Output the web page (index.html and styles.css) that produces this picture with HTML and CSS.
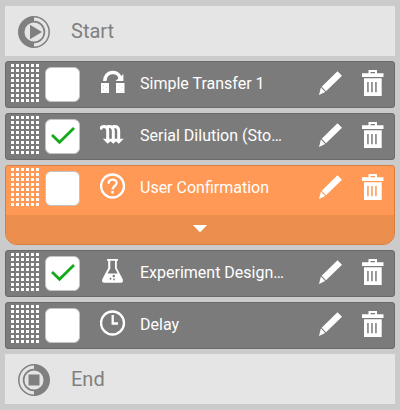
FILE: index.html
```
<!DOCTYPE html>
<html lang="en">
<head>
    <meta charset="UTF-8">
    <meta name="viewport" content="width=device-width, initial-scale=1.0">
    <title>Protocol Steps</title>
    <link rel="stylesheet" href="styles.css">
</head>
<body>
    <!-- shared icons -->
    <svg class="hidden">
        <symbol id="check" viewBox="0 0 35 35">
            <path d="M7 16 L14.5 23.3 L29 9" fill="none" stroke="#13ab1b" stroke-width="2.8"/>
        </symbol>
        <symbol id="pencil" viewBox="0 0 26 26">
            <path d="M20.5 1.2 L25 5.7 L9 21.2 L4.7 16.8 Z M3.9 17.6 L8.2 21.9 L2 25 Z"/>
        </symbol>
        <symbol id="trash" viewBox="0 0 22 26">
            <path fill-rule="evenodd" d="M0 3.2 H6.5 V0 H15 V3.2 H21.5 V7 H0 Z M8.5 2 V3.2 H13 V2 Z M2 8.2 H19.7 V26 H2 Z M5.2 12 V22.2 H6.7 V12 Z M9.2 12 V22.2 H10.7 V12 Z M13.2 12 V22.2 H14.7 V12 Z"/>
        </symbol>
        <symbol id="transfer" viewBox="0 0 26 26">
            <path d="M4.8 12 C5 1.5 18 1 20.2 9" fill="none" stroke="currentColor" stroke-width="3.6"/>
            <path d="M23.4 5 V12 H15.5 Z"/>
            <path d="M1 14 H9 V24 H1 Z M16 14 H24.5 V24 H16 Z"/>
            <path d="M3 16.5 h1 M6 18.5 h1 M3 20.5 h1 M6 22.5 h1 M18.5 16.5 h1 M21.5 18.5 h1 M18.5 20.5 h1 M21.5 22.5 h1" stroke="#d5d5d5" stroke-width="1"/>
        </symbol>
        <symbol id="dilution" viewBox="0 0 26 26">
            <path d="M.5 8.5 C1 6.4 2 5.6 3.6 5.6 C6.6 5.6 7.7 7 7.7 10 V20 M7 5.6 H8.8 C12 5.6 13.3 7 13.3 10 V20 M12.5 5.6 H14.4 C17.6 5.6 18.7 7 18.7 10 V20" fill="none" stroke="currentColor" stroke-width="3"/>
            <path d="M2.8 17.8 H23.8 L18.7 22.8 L16 20.2 L13.3 22.8 L10.5 20.2 L7.7 22.8 Z"/>
        </symbol>
        <symbol id="question" viewBox="0 0 26 26">
            <g fill="none" stroke="currentColor" stroke-width="2.3">
                <circle cx="12.5" cy="13" r="11.5"/>
                <path d="M8.5 10.7 C8.5 5.2 16.6 5.5 16.6 10 C16.6 12.8 12.6 13 12.6 16.5"/>
            </g>
            <path d="M11.3 18 H13.8 V20.5 H11.3 Z"/>
        </symbol>
        <symbol id="flask" viewBox="0 0 26 26">
            <path fill-rule="evenodd" d="M7 1 H18 V2.8 H16.8 V10 L22.6 21 Q23.8 24.7 21 24.7 H4.3 Q1.2 24.7 2.4 21 L8.2 10 V2.8 H7 Z M10.3 2.8 V10.5 L7.5 15.5 H17.8 L15 10.5 V2.8 Z"/>
            <g fill="#7b7b7b">
                <circle cx="13.8" cy="18" r="1.2"/>
                <circle cx="10.5" cy="20.8" r="1"/>
                <circle cx="14" cy="21.4" r=".9"/>
            </g>
        </symbol>
        <symbol id="clock" viewBox="0 0 26 26">
            <g fill="none" stroke="currentColor" stroke-width="2.3">
                <circle cx="12.5" cy="13" r="11.5"/>
                <path d="M12.7 5 V13.5 H18"/>
            </g>
        </symbol>
    </svg>

    <div class="steps">
        <div class="terminal">
            <svg class="terminal-icon" viewBox="0 0 32 32">
                <g fill="none" stroke="currentColor">
                    <circle cx="16" cy="16" r="15.2" stroke-width="1.5"/>
                    <circle cx="16" cy="16" r="10.4" stroke-width="1.7"/>
                    <path d="M16 3 A13 13 0 0 0 16 29" stroke-width="5"/>
                </g>
                <path d="M12 8.8 L24 16 L12 23.2 Z"/>
            </svg>
            <span>Start</span>
        </div>

        <div class="step">
            <div class="step-row">
                <div class="grip"></div>
                <div class="checkbox"></div>
                <svg class="step-icon"><use href="#transfer"/></svg>
                <span class="step-name">Simple Transfer 1</span>
                <svg class="edit"><use href="#pencil"/></svg>
                <svg class="delete"><use href="#trash"/></svg>
            </div>
        </div>

        <div class="step">
            <div class="step-row">
                <div class="grip"></div>
                <div class="checkbox"><svg><use href="#check"/></svg></div>
                <svg class="step-icon"><use href="#dilution"/></svg>
                <span class="step-name">Serial Dilution (Sto…</span>
                <svg class="edit"><use href="#pencil"/></svg>
                <svg class="delete"><use href="#trash"/></svg>
            </div>
        </div>

        <div class="step active">
            <div class="step-row">
                <div class="grip"></div>
                <div class="checkbox"></div>
                <svg class="step-icon"><use href="#question"/></svg>
                <span class="step-name">User Confirmation</span>
                <svg class="edit"><use href="#pencil"/></svg>
                <svg class="delete"><use href="#trash"/></svg>
            </div>
            <div class="expand">
                <svg class="arrow" viewBox="0 0 14 8"><path d="M0 0 H14 L7 7.5 Z"/></svg>
            </div>
        </div>

        <div class="step">
            <div class="step-row">
                <div class="grip"></div>
                <div class="checkbox"><svg><use href="#check"/></svg></div>
                <svg class="step-icon"><use href="#flask"/></svg>
                <span class="step-name">Experiment Design…</span>
                <svg class="edit"><use href="#pencil"/></svg>
                <svg class="delete"><use href="#trash"/></svg>
            </div>
        </div>

        <div class="step">
            <div class="step-row">
                <div class="grip"></div>
                <div class="checkbox"></div>
                <svg class="step-icon"><use href="#clock"/></svg>
                <span class="step-name">Delay</span>
                <svg class="edit"><use href="#pencil"/></svg>
                <svg class="delete"><use href="#trash"/></svg>
            </div>
        </div>

        <div class="terminal">
            <svg class="terminal-icon" viewBox="0 0 32 32">
                <g fill="none" stroke="currentColor">
                    <circle cx="16" cy="16" r="15.2" stroke-width="1.5"/>
                    <circle cx="16" cy="16" r="10.4" stroke-width="1.7"/>
                    <path d="M16 3 A13 13 0 0 1 16 29" stroke-width="5"/>
                </g>
                <path d="M10.5 10.5 H21.5 V21.5 H10.5 Z"/>
            </svg>
            <span>End</span>
        </div>
    </div>
</body>
</html>
```
FILE: styles.css
```
* {
    box-sizing: border-box;
}

body {
    margin: 0;
    background-color: #cbcbcb;
    font-family: Roboto, "Liberation Sans", sans-serif;
}

.hidden {
    display: none;
}

svg {
    display: block;
    flex: none;
    fill: currentColor;
}

.steps {
    display: flex;
    flex-direction: column;
    gap: 5px;
    padding: 6px 5px;
}

.terminal {
    display: flex;
    align-items: center;
    height: 50px;
    padding-left: 13px;
    background-color: #e5e5e5;
    color: #808080;
    font-size: 20px;
}

.terminal-icon {
    width: 32px;
    height: 32px;
    margin: 2px 21px 0 0;
}

.step {
    border: 1px solid #696969;
    border-radius: 3px;
    background-color: #7b7b7b;
    color: #ffffff;
    overflow: hidden;
}

.step-row {
    display: flex;
    align-items: flex-start;
    height: 45px;
    padding: 2px 10px 0 5px;
}

/* 6 x 8 dots */
.grip {
    width: 30px;
    height: 40px;
    background-image: conic-gradient(from 270deg at 3px 3px, #ffffff 90deg, transparent 0);
    background-size: 5px 5px;
}

.checkbox {
    width: 35px;
    height: 35px;
    margin: 3px 0 0 4px;
    border: 1px solid #c4c4c4;
    border-radius: 6px;
    background-color: #ffffff;
}

.checkbox svg {
    width: 35px;
    height: 35px;
    margin: -1px;
}

.step-icon {
    width: 26px;
    height: 26px;
    margin: 5px 14px 0 20px;
}

.step-name {
    flex: 1;
    font-size: 16px;
    line-height: 20px;
    margin-top: 10px;
    white-space: nowrap;
}

.edit {
    width: 26px;
    height: 26px;
    margin: 6px 19px 0 0;
}

.delete {
    width: 22px;
    height: 26px;
    margin-top: 6px;
}

.active {
    border-color: #d67f43;
    border-radius: 3px 3px 12px 12px;
    background-color: #ff9955;
}

.active .step-row {
    height: 49px;
}

.expand {
    display: flex;
    justify-content: center;
    height: 29px;
    padding-top: 10px;
    background-color: #ec8e4d;
}

.arrow {
    width: 14px;
    height: 8px;
}
```
